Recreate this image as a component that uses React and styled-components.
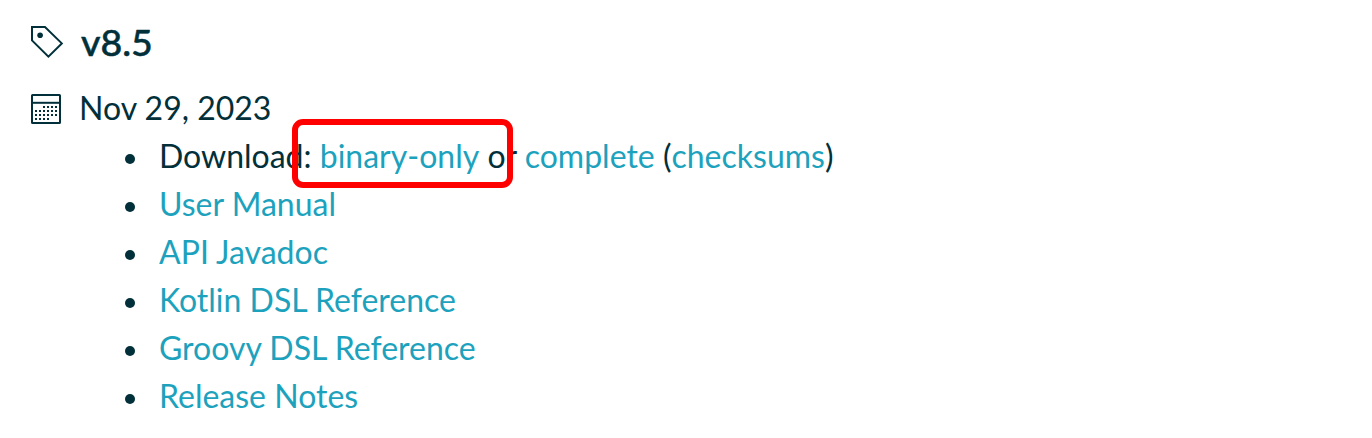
import React from "react";
import styled, { createGlobalStyle } from "styled-components";

const ink = "#02303a";
const link = "#1da2bd";

const GlobalStyle = createGlobalStyle`
  body {
    margin: 0;
    background: #fff;
  }
`;

const Page = styled.main`
  position: relative;
  box-sizing: border-box;
  width: 1372px;
  height: 438px;
  overflow: hidden;
  padding: 16px 0 0 30px;
  color: ${ink};
  font: 400 32px/48px Lato, sans-serif;
`;

const Heading = styled.h3`
  display: flex;
  align-items: center;
  gap: 17px;
  margin: 0;
  height: 52px;
  font-size: 37.5px;
  font-weight: 500;
  -webkit-text-stroke: 0.5px ${ink};
`;

const ReleaseDate = styled.div`
  display: flex;
  align-items: center;
  gap: 15px;
  margin-top: 17px;
  height: 48px;
`;

const Label = styled.span`
  padding-bottom: ${({ $lift = 2 }) => $lift}px;
`;

const Icon = styled.svg`
  display: block;
  flex: none;
`;

const Links = styled.ul`
  margin: 0;
  padding: 0 0 0 90px;
  list-style: none;
`;

const Item = styled.li`
  display: flex;
  align-items: center;
  height: 48px;
  white-space: pre;

  &::before {
    content: "";
    width: 10px;
    height: 10px;
    margin: 4px 24px 0 5px;
    border-radius: 50%;
    background: ${ink};
  }
`;

const Anchor = styled.a`
  display: inline-block;
  color: ${link};
  text-decoration: none;
`;

const Highlight = styled.div`
  position: absolute;
  left: 292px;
  top: 119px;
  box-sizing: border-box;
  width: 221px;
  height: 69px;
  border: 6px solid #ff0000;
  border-radius: 11px;
`;

const calendarRows = [
  [2, 5],
  [0, 5],
  [0, 5],
  [0, 3],
];

function TagIcon() {
  return (
    <Icon width="34" height="34" viewBox="0 1 34 34">
      <path d="M2 3H15L31.8 19.4L18.4 32.6L2 16.4Z" fill="none" stroke={ink} strokeWidth="2" />
      <circle cx="10.1" cy="11.3" r="2.8" fill={ink} />
    </Icon>
  );
}

function CalendarIcon() {
  return (
    <Icon width="34" height="34" viewBox="0 0 34 34">
      <rect x="2" y="3" width="28" height="28" rx="0.6" fill="none" stroke={ink} strokeWidth="2" />
      <path d="M2 10.8H30" stroke={ink} strokeWidth="2" />
      {calendarRows.map(([from, to], row) =>
        Array.from({ length: to - from + 1 }, (_, i) => (
          <rect key={`${row}-${i}`} x={5 + (from + i) * 4} y={14 + row * 4} width="2" height="2" fill={ink} />
        ))
      )}
    </Icon>
  );
}

const references = ["User Manual", "API Javadoc", "Kotlin DSL Reference", "Groovy DSL Reference", "Release Notes"];

export default function App() {
  return (
    <>
      <GlobalStyle />
      <Page>
        <Heading>
          <TagIcon />
          <Label $lift={0}>v8.5</Label>
        </Heading>
        <ReleaseDate>
          <CalendarIcon />
          <Label>Nov 29, 2023</Label>
        </ReleaseDate>
        <Links>
          <Item>
            <Label>
              Download: <Anchor>binary-only</Anchor> or <Anchor>complete</Anchor> (<Anchor>checksums</Anchor>)
            </Label>
          </Item>
          {references.map((name) => (
            <Item key={name}>
              <Label>
                <Anchor>{name}</Anchor>
              </Label>
            </Item>
          ))}
        </Links>
        <Highlight />
      </Page>
    </>
  );
}
